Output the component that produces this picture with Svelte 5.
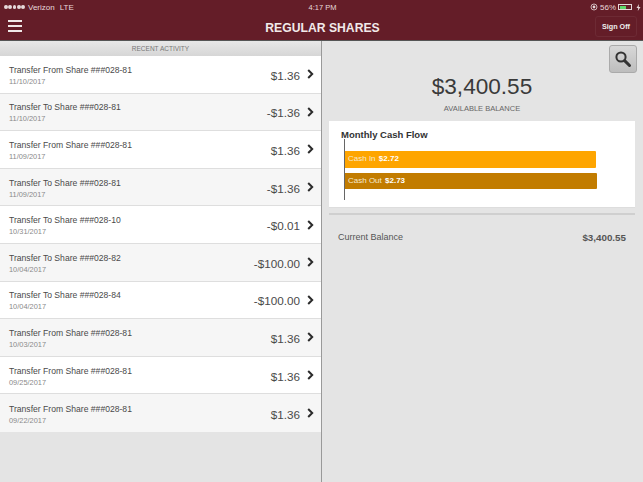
<script>
  const rows = [
    ['Transfer From Share ###028-81', '11/10/2017', '$1.36'],
    ['Transfer To Share ###028-81', '11/10/2017', '-$1.36'],
    ['Transfer From Share ###028-81', '11/09/2017', '$1.36'],
    ['Transfer To Share ###028-81', '11/09/2017', '-$1.36'],
    ['Transfer To Share ###028-10', '10/31/2017', '-$0.01'],
    ['Transfer To Share ###028-82', '10/04/2017', '-$100.00'],
    ['Transfer To Share ###028-84', '10/04/2017', '-$100.00'],
    ['Transfer From Share ###028-81', '10/03/2017', '$1.36'],
    ['Transfer From Share ###028-81', '09/25/2017', '$1.36'],
    ['Transfer From Share ###028-81', '09/22/2017', '$1.36']
  ];
</script>

<div class="page">
  <header>
    <div class="status">
      <span class="carrier">
        <span class="dots"><i></i><i></i><i></i><i></i><i></i></span>
        <span class="net">Verizon</span><span class="net">LTE</span>
      </span>
      <span class="time">4:17 PM</span>
      <span class="batt">
        <svg width="8" height="8" viewBox="0 0 8 8"><circle cx="4" cy="4" r="3" fill="none" stroke="#e6d8da" stroke-width="0.8" /><circle cx="4" cy="4" r="1.4" fill="#e6d8da" /></svg>
        <span class="pct">56%</span>
        <span class="cell"><span class="charge"></span></span>
        <svg width="5" height="7" viewBox="0 0 5 7"><path d="M3 0 L0.5 4 L2.2 4 L1.8 7 L4.5 3 L2.7 3 Z" fill="#e6d8da" /></svg>
      </span>
    </div>
    <div class="bar">
      <div class="burger"><i></i><i></i><i></i></div>
      <h1>REGULAR SHARES</h1>
      <div class="signoff">Sign Off</div>
    </div>
  </header>

  <main>
    <section class="left">
      <div class="recent">RECENT ACTIVITY</div>
      {#each rows as row, i}
        <div class="row" class:alt={i % 2 === 1}>
          <div class="info">
            <div class="name">{row[0]}</div>
            <div class="date">{row[1]}</div>
          </div>
          <div class="amount">{row[2]}</div>
          <svg class="chev" width="7" height="10" viewBox="0 0 7 10"><path d="M1.2 1 L5.2 5 L1.2 9" fill="none" stroke="#2b2b2b" stroke-width="2" /></svg>
        </div>
      {/each}
    </section>

    <section class="right">
      <div class="tools">
        <button class="search" aria-label="Search">
          <svg width="18" height="18" viewBox="0 0 18 18"><circle cx="7" cy="7" r="4.6" fill="none" stroke="#333" stroke-width="2" /><path d="M10.6 10.6 L15.5 15.5" stroke="#333" stroke-width="3" stroke-linecap="round" /></svg>
        </button>
      </div>
      <div class="balance">$3,400.55</div>
      <div class="avail">AVAILABLE BALANCE</div>
      <div class="card">
        <div class="title">Monthly Cash Flow</div>
        <div class="chart">
          <div class="cbar in"><span>Cash In</span> <b>$2.72</b></div>
          <div class="cbar out"><span>Cash Out</span> <b>$2.73</b></div>
        </div>
      </div>
      <div class="current">
        <span>Current Balance</span>
        <b>$3,400.55</b>
      </div>
    </section>
  </main>
</div>

<style>
  :global(body) {
    margin: 0;
    font-family: 'Liberation Sans', Arial, sans-serif;
  }

  .page {
    width: 643px;
    height: 482px;
    display: flex;
    flex-direction: column;
    overflow: hidden;
    background: #e4e4e4;
  }

  header {
    height: 41px;
    flex: none;
    background: #641d28;
    color: #fff;
    border-bottom: 1px solid #555;
    box-sizing: border-box;
  }

  .status {
    height: 14px;
    display: grid;
    grid-template-columns: 1fr auto 1fr;
    align-items: center;
    padding: 0 2px 0 4px;
    font-size: 7.5px;
    color: #e6d8da;
  }

  .carrier {
    display: flex;
    align-items: center;
  }

  .dots {
    display: flex;
    gap: 0.5px;
    width: 24px;
  }

  .dots i {
    display: block;
    width: 3.8px;
    height: 3.8px;
    border-radius: 50%;
    background: #e6d8da;
  }

  .net {
    font-size: 8px;
    margin-right: 5px;
  }

  .batt {
    justify-self: end;
    display: flex;
    align-items: center;
    gap: 2px;
  }

  .pct {
    font-size: 8px;
  }

  .cell {
    width: 14px;
    height: 6px;
    border: 0.5px solid #e6d8da;
    display: block;
    box-sizing: border-box;
    padding: 0.5px;
    margin-right: 2px;
  }

  .charge {
    display: block;
    width: 55%;
    height: 100%;
    background: #5fd76a;
  }

  .bar {
    height: 26px;
    display: grid;
    grid-template-columns: 1fr auto 1fr;
    align-items: center;
    padding: 0 6px 0 8px;
  }

  .burger {
    display: flex;
    flex-direction: column;
    gap: 3px;
    margin-top: -2px;
  }

  .burger i {
    display: block;
    width: 14px;
    height: 2px;
    background: #f0e8e8;
  }

  h1 {
    margin: 1px 0 0;
    font-size: 12.2px;
    font-weight: bold;
    color: #f2eaea;
  }

  .signoff {
    justify-self: end;
    font-size: 7.2px;
    font-weight: bold;
    color: #eee;
    padding: 5px 6px;
    border: 1px solid #6d2a34;
    border-radius: 3px;
    margin-top: -1px;
  }

  main {
    flex: 1;
    display: flex;
  }

  .left {
    width: 321px;
    flex: none;
    border-right: 1px solid #999;
    background: #e4e4e4;
  }

  .recent {
    height: 15px;
    font-size: 6.5px;
    line-height: 15px;
    text-align: center;
    color: #777;
    background: linear-gradient(#e8e8e8, #d6d6d6);
  }

  .row {
    height: 37.6px;
    box-sizing: border-box;
    display: flex;
    align-items: center;
    background: #fff;
    padding: 0 7px 0 9px;
    border-bottom: 1px solid #dedede;
  }

  .row.alt {
    background: #f6f6f6;
  }

  .row:last-child {
    border-bottom: 0;
  }

  .info {
    flex: 1;
    padding-top: 3px;
  }

  .name {
    font-size: 8.6px;
    color: #4a4a4a;
    line-height: 12px;
  }

  .date {
    font-size: 7.4px;
    color: #8a8a8a;
    line-height: 12px;
  }

  .amount {
    font-size: 11.7px;
    color: #4a4a4a;
    margin: 2px 7px 0 0;
  }

  .right {
    flex: 1;
    min-width: 0;
    display: flex;
    flex-direction: column;
    padding: 0 8px 0 7px;
  }

  .tools {
    display: flex;
    justify-content: flex-end;
    padding-top: 4px;
    margin-right: -2px;
  }

  .search {
    width: 28px;
    height: 28px;
    padding: 0;
    display: flex;
    align-items: center;
    justify-content: center;
    background: linear-gradient(#d8d8d8, #bdbdbd);
    border: 1px solid #aaa;
    border-radius: 3px;
  }

  .balance {
    text-align: center;
    font-size: 22.6px;
    line-height: 28px;
    color: #3a3a3a;
  }

  .avail {
    margin-top: 3px;
    text-align: center;
    font-size: 7.5px;
    line-height: 10px;
    color: #666;
    margin-bottom: 7px;
  }

  .card {
    height: 87px;
    box-sizing: border-box;
    background: #fff;
    padding: 9px 12px 0;
    border-bottom: 1px solid #ddd;
  }

  .title {
    font-size: 9.5px;
    font-weight: bold;
    color: #333;
    line-height: 10px;
  }

  .chart {
    margin: -1px 0 0 3px;
    height: 61px;
    border-left: 1px solid #666;
    padding-top: 12px;
    box-sizing: border-box;
    display: flex;
    flex-direction: column;
    gap: 5px;
  }

  .cbar {
    height: 16.5px;
    line-height: 16.5px;
    font-size: 8px;
    color: #f6ead0;
    padding-left: 3px;
    border-radius: 0 1px 1px 0;
  }

  .cbar b {
    color: #fff;
    margin-left: 1px;
  }

  .cbar.in {
    width: 248px;
    background: #fea500;
  }

  .cbar.out {
    width: 249px;
    background: #c27c00;
  }

  .current {
    margin-top: 5px;
    border-top: 2px solid #cfcfcf;
    padding: 17px 9px 0 9px;
    display: flex;
    justify-content: space-between;
    font-size: 9px;
    line-height: 11px;
    color: #555;
  }

  .current b {
    font-size: 9.8px;
  }
</style>
